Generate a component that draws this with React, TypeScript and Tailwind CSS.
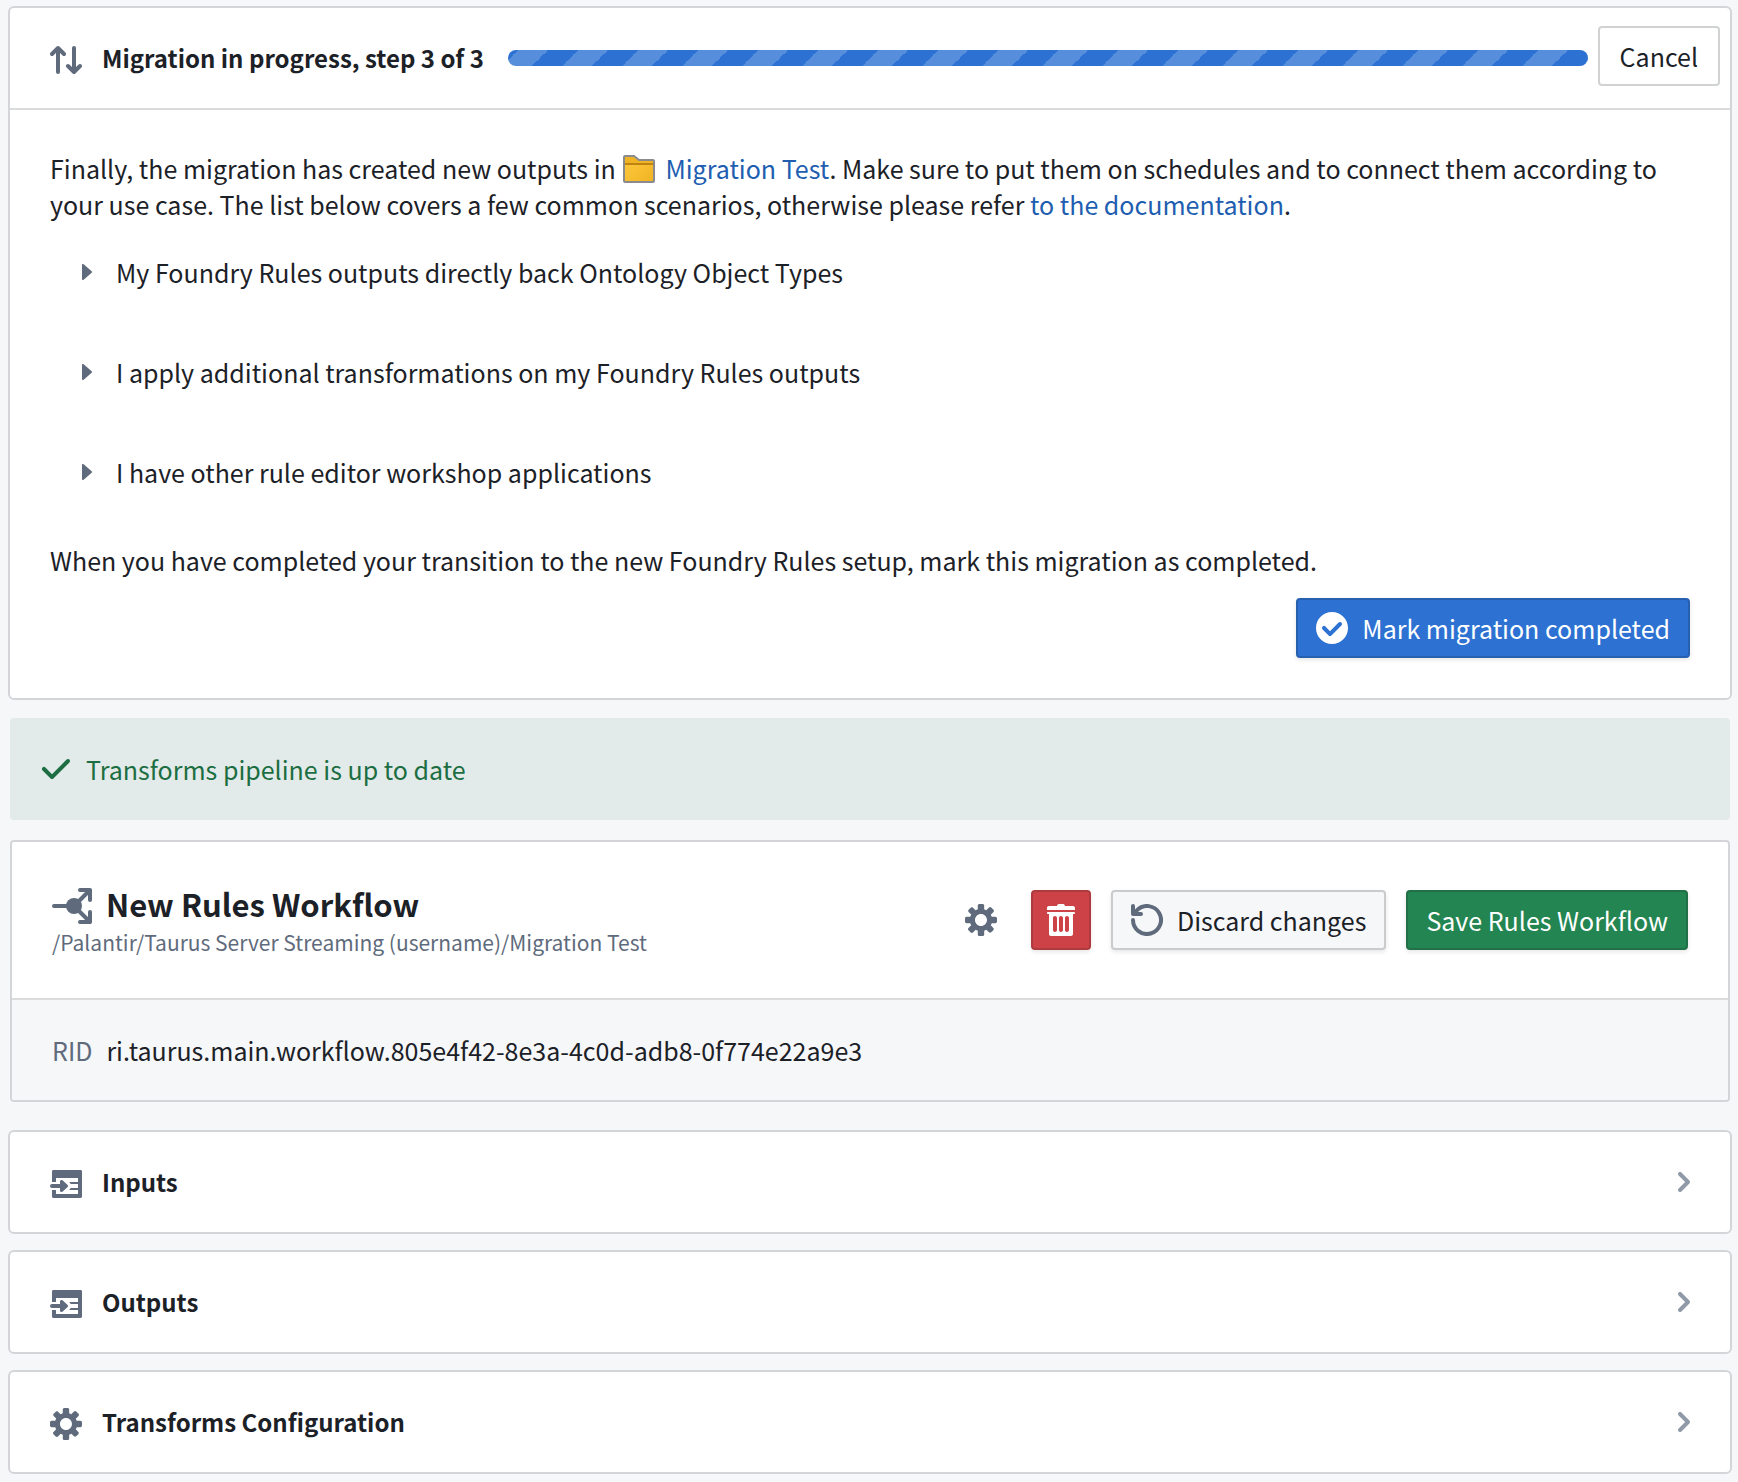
import type { ReactNode } from 'react'

interface IconProps {
  path: string
  className?: string
}

interface Section {
  id: string
  title: string
  icon: ReactNode
}

const TICK =
  'M14 3c-.28 0-.53.11-.71.29L6 10.59l-3.29-3.3a1.003 1.003 0 00-1.42 1.42l4 4c.18.18.43.29.71.29s.53-.11.71-.29l8-8A1.003 1.003 0 0014 3z'
const TICK_CIRCLE =
  'M8 16c-4.42 0-8-3.58-8-8s3.58-8 8-8 8 3.58 8 8-3.58 8-8 8zm4-11c-.28 0-.53.11-.71.29L7 9.59l-2.29-2.3a1.003 1.003 0 00-1.42 1.42l3 3c.18.18.43.29.71.29s.53-.11.71-.29l5-5A1.003 1.003 0 0012 5z'
const CHEVRON_RIGHT =
  'M10.71 7.29l-4-4a1.003 1.003 0 00-1.42 1.42L8.59 8 5.3 11.29c-.19.18-.3.43-.3.71a1.003 1.003 0 001.71.71l4-4c.18-.18.29-.43.29-.71 0-.28-.11-.53-.29-.71z'
const CARET_RIGHT =
  'M11 8c0-.15-.07-.28-.17-.37l-4-3.5A.495.495 0 006 4.5v7a.495.495 0 00.83.37l4-3.5c.1-.09.17-.22.17-.37z'
const COG =
  'M15.19 6.39h-1.85c-.11-.37-.27-.71-.45-1.04l1.36-1.36c.31-.31.31-.82 0-1.13l-1.13-1.13a.803.803 0 00-1.13 0l-1.36 1.36c-.33-.17-.67-.33-1.04-.44V.79c0-.44-.36-.8-.8-.8h-1.6c-.44 0-.8.36-.8.8v1.86c-.39.12-.75.28-1.1.47l-1.3-1.3c-.3-.3-.79-.3-1.09 0L1.82 2.91c-.3.3-.3.79 0 1.09l1.3 1.3c-.2.34-.36.7-.48 1.09H.79c-.44 0-.8.36-.8.8v1.6c0 .44.36.8.8.8h1.85c.11.37.27.71.45 1.04l-1.36 1.36c-.31.31-.31.82 0 1.13l1.13 1.13c.31.31.82.31 1.13 0l1.36-1.36c.33.18.67.33 1.04.44v1.86c0 .44.36.8.8.8h1.6c.44 0 .8-.36.8-.8v-1.86c.39-.12.75-.28 1.1-.47l1.3 1.3c.3.3.79.3 1.09 0l1.09-1.09c.3-.3.3-.79 0-1.09l-1.3-1.3c.19-.35.36-.71.48-1.1h1.85c.44 0 .8-.36.8-.8v-1.6a.816.816 0 00-.81-.79zm-7.2 4.6c-1.66 0-3-1.34-3-3s1.34-3 3-3 3 1.34 3 3-1.34 3-3 3z'
const TRASH =
  'M14.49 3.99h-13c-.28 0-.5.22-.5.5s.22.5.5.5h.5v10c0 .55.45 1 1 1h10c.55 0 1-.45 1-1v-10h.5c.28 0 .5-.22.5-.5s-.22-.5-.5-.5zm-8.5 9c0 .55-.45 1-1 1s-1-.45-1-1v-6c0-.55.45-1 1-1s1 .45 1 1v6zm3 0c0 .55-.45 1-1 1s-1-.45-1-1v-6c0-.55.45-1 1-1s1 .45 1 1v6zm3 0c0 .55-.45 1-1 1s-1-.45-1-1v-6c0-.55.45-1 1-1s1 .45 1 1v6zm2-12h-4c0-.55-.45-1-1-1h-2c-.55 0-1 .45-1 1h-4c-.55 0-1 .45-1 1v1h14v-1c0-.55-.45-1-1-1z'
const IMPORT =
  'M1.7 1h13.6c.4 0 .7.3.7.7v12.6c0 .4-.3.7-.7.7H1.7c-.4 0-.7-.3-.7-.7V11h2v2h11v-2H9.6l.8-1H14V8h-3.6l-.8-1H14V5H3v2H1V1.7c0-.4.3-.7.7-.7z M1 8h4V6.8c0-.8.9-1.1 1.4-.6l2.4 2.3c.3.3.3.7 0 1l-2.4 2.3c-.5.5-1.4.2-1.4-.6V10H1a1 1 0 010-2z'

function Icon({ path, className = 'text-[#5f6b7c]' }: IconProps) {
  return (
    <svg viewBox="0 0 16 16" className={`size-8 shrink-0 ${className}`} fill="currentColor" aria-hidden="true">
      <path d={path} />
    </svg>
  )
}

function SwapIcon() {
  return (
    <svg viewBox="0 0 16 16" className="mt-1 size-8 shrink-0 text-[#5f6b7c]" fill="none" stroke="currentColor" strokeWidth="2" strokeLinecap="round" strokeLinejoin="round" aria-hidden="true">
      <path d="M4 14V2M1 5l3-3 3 3M12 2v12M9 11l3 3 3-3" />
    </svg>
  )
}

function ResetIcon() {
  return (
    <svg viewBox="0 0 16 16" className="size-8 shrink-0 text-[#5f6b7c]" fill="none" stroke="currentColor" strokeWidth="2" strokeLinecap="round" aria-hidden="true">
      <path d="M1 1v4h4" strokeLinejoin="round" />
      <path d="M1 8A7 7 0 1 0 3.05 3.05L1.5 4.6" />
    </svg>
  )
}

function WorkflowIcon() {
  return (
    <svg viewBox="0 0 20 20" className="mt-1 size-10 shrink-0 text-[#5f6b7c]" fill="none" stroke="currentColor" strokeWidth="2" strokeLinecap="round" strokeLinejoin="round" aria-hidden="true">
      <path d="M1 10h8M14 2h5v5M19 2l-6 6M14 18h5v-5M19 18l-6-6" />
      <circle cx="11" cy="10" r="4" fill="currentColor" stroke="none" />
    </svg>
  )
}

function FolderIcon() {
  return (
    <svg viewBox="0 0 32 32" className="mr-2.5 ml-0.5 inline size-8 align-[-6px]" aria-hidden="true">
      <defs>
        <linearGradient id="folder" x1="0" y1="0" x2="1" y2="1">
          <stop offset="0" stopColor="#ffcb41" />
          <stop offset="1" stopColor="#f0b323" />
        </linearGradient>
      </defs>
      <path d="M1 4a1 1 0 011-1h9l5 4h14a1 1 0 011 1v20a1 1 0 01-1 1H2a1 1 0 01-1-1z" fill="url(#folder)" />
      <path d="M2 4h8.500l5 4H30v2H2z" fill="#f0b323" />
      <path d="M2 10h28v2H2z" fill="#c08412" />
      <path d="M1 4a1 1 0 011-1h9l5 4h14a1 1 0 011 1v20a1 1 0 01-1 1H2a1 1 0 01-1-1z" fill="none" stroke="#8a8b8f" strokeWidth="2" />
    </svg>
  )
}

const scenarios = [
  'My Foundry Rules outputs directly back Ontology Object Types',
  'I apply additional transformations on my Foundry Rules outputs',
  'I have other rule editor workshop applications',
]

const sections: Section[] = [
  { id: 'inputs', title: 'Inputs', icon: <Icon path={IMPORT} className="mt-1 text-[#5f6b7c]" /> },
  { id: 'outputs', title: 'Outputs', icon: <Icon path={IMPORT} className="mt-1 text-[#5f6b7c]" /> },
  { id: 'transforms', title: 'Transforms Configuration', icon: <Icon path={COG} className="mt-1 text-[#5f6b7c]" /> },
]

function MigrationCard() {
  return (
    <section className="rounded-md border-2 border-[#d3d5d9] bg-white">
      <header className="flex h-[102px] items-center border-b-2 border-[#dadbdd] pr-2.5 pl-10">
        <SwapIcon />
        <h2 className="ml-5 text-2xl leading-9 font-bold whitespace-nowrap">Migration in progress, step 3 of 3</h2>
        <div
          role="progressbar"
          aria-label="Migration progress"
          className="mr-2.5 ml-6 h-4 flex-1 rounded-full bg-[#2d72d2] bg-[linear-gradient(-45deg,rgba(255,255,255,0.2)_25%,transparent_25%,transparent_50%,rgba(255,255,255,0.2)_50%,rgba(255,255,255,0.2)_75%,transparent_75%)] bg-[length:60px_60px] bg-[position:-20px_0]"
        ></div>
        <button type="button" className="mb-1 h-15 rounded border-2 border-[#d0d2d4] px-5">
          Cancel
        </button>
      </header>

      <div className="p-10">
        <p>
          Finally, the migration has created new outputs in{' '}
          <a href="#migration-test" className="text-[#215db0]"><FolderIcon />Migration Test</a>. Make sure to put them on
          schedules and to connect them according to your use case. The list below covers a few common scenarios,
          otherwise please refer <a href="#documentation" className="text-[#215db0]">to the documentation</a>.
        </p>
        <ul className="mt-5 pl-5">
          {scenarios.map(scenario => (
            <li key={scenario} className="mb-10">
              <button type="button" aria-expanded="false" className="flex h-15 items-center gap-3.5 text-left">
                <Icon path={CARET_RIGHT} />
                {scenario}
              </button>
            </li>
          ))}
        </ul>
        <p>When you have completed your transition to the new Foundry Rules setup, mark this migration as completed.</p>
        <div className="mt-5 flex justify-end">
          <button
            type="button"
            className="flex h-15 items-center gap-3.5 rounded border-2 border-[#2860b0] bg-[#2d72d2] px-4.5 text-white shadow-[0_2px_4px_rgba(17,20,24,0.1)]"
          >
            <Icon path={TICK_CIRCLE} className="text-white" />
            Mark migration completed
          </button>
        </div>
      </div>
    </section>
  )
}

function WorkflowCard() {
  return (
    <section className="mx-0.5 mt-5 rounded border-2 border-[#d3d5d9] bg-white">
      <div className="flex h-[158px] items-center justify-between border-b-2 border-[#dadbdd] px-10">
        <div>
          <div className="flex items-center gap-3.5">
            <WorkflowIcon />
            <h1 className="text-[31px] leading-10 font-bold">New Rules Workflow</h1>
          </div>
          <p className="text-[21px] leading-8 text-[#5f6b7c]">/Palantir/Taurus Server Streaming (username)/Migration Test</p>
        </div>
        <div className="flex gap-5">
          <button type="button" aria-label="Settings" className="flex size-15 items-center justify-center">
            <Icon path={COG} />
          </button>
          <button
            type="button"
            aria-label="Delete workflow"
            className="flex size-15 items-center justify-center rounded border-2 border-[#ac3a3f] bg-[#cd4246] shadow-[0_2px_4px_rgba(17,20,24,0.1)]"
          >
            <Icon path={TRASH} className="text-white" />
          </button>
          <button
            type="button"
            className="flex h-15 items-center gap-3.5 rounded border-2 border-[#c9cbcd] bg-[#f6f7f9] px-4.5 shadow-[0_2px_4px_rgba(17,20,24,0.1)]"
          >
            <ResetIcon />
            Discard changes
          </button>
          <button
            type="button"
            className="h-15 rounded border-2 border-[#227047] bg-[#238551] px-4.5 text-white shadow-[0_2px_4px_rgba(17,20,24,0.1)]"
          >
            Save Rules Workflow
          </button>
        </div>
      </div>
      <dl className="flex h-[100px] items-center gap-3.5 rounded-b bg-[#f6f7f9] px-10">
        <dt className="text-[#5f6b7c]">RID</dt>
        <dd>ri.taurus.main.workflow.805e4f42-8e3a-4c0d-adb8-0f774e22a9e3</dd>
      </dl>
    </section>
  )
}

export default function App() {
  return (
    <main className="min-h-screen bg-[#f6f7f9] pt-1.5 pr-1.5 pb-2 pl-2 font-['Noto_Sans_CJK_SC',sans-serif] text-[25px] leading-9 text-[#1c2127]">
      <MigrationCard />

      <div role="status" className="mx-0.5 mt-4.5 flex h-[102px] items-center gap-3.5 rounded bg-[#e2ebe9] px-7.5 text-[#1c6e42]">
        <Icon path={TICK} className="text-[#1c6e42]" />
        Transforms pipeline is up to date
      </div>

      <WorkflowCard />

      <div className="mt-7 space-y-4">
        {sections.map(section => (
          <button
            key={section.id}
            type="button"
            aria-expanded="false"
            className="flex h-[104px] w-full items-center rounded-md border-2 border-[#d3d5d9] bg-white pr-7.5 pl-10 text-left"
          >
            {section.icon}
            <span className="ml-5 flex-1 text-2xl leading-9 font-bold">{section.title}</span>
            <Icon path={CHEVRON_RIGHT} className="text-[#8f99a8]" />
          </button>
        ))}
      </div>
    </main>
  )
}
